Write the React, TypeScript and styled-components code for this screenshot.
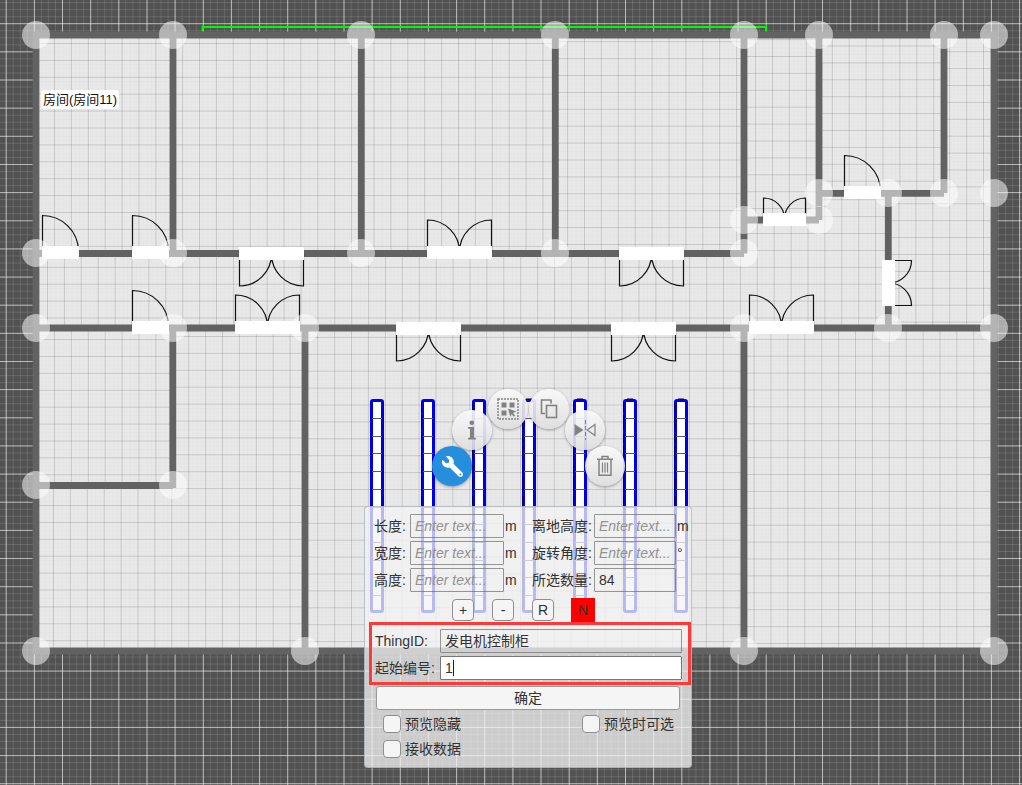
import React, { useState } from 'react';
import styled, { createGlobalStyle } from 'styled-components';
import { FaWrench } from 'react-icons/fa';

const GlobalStyle = createGlobalStyle`
  *, *::before, *::after { box-sizing: border-box; }
  body {
    margin: 0;
    background: #525252;
    color: #323232;
    font-family: "Liberation Sans", "Noto Sans CJK SC", sans-serif;
    font-size: 14px;
  }
`;

const Stage = styled.main`
  position: relative;
  width: 100%;
  min-height: 100vh;
  overflow: hidden;
`;

const PlanCanvas = styled.svg`
  position: absolute;
  inset: 0;
  width: 100%;
  height: 100%;
`;

const RoomTag = styled.div`
  position: absolute;
  left: 41px;
  top: 90px;
  padding: 0 2px;
  border-radius: 3px;
  background: #fff;
  color: #111;
  font-size: 13px;
  line-height: 19px;
  white-space: nowrap;
`;

const ToolButton = styled.button<{ $x: number; $y: number; $active?: boolean }>`
  position: absolute;
  left: ${p => p.$x - 20}px;
  top: ${p => p.$y - 20}px;
  width: 40px;
  height: 40px;
  display: flex;
  align-items: center;
  justify-content: center;
  padding: 0;
  border: 0;
  border-radius: 50%;
  color: ${p => (p.$active ? '#fff' : '#828282')};
  background: ${p =>
    p.$active
      ? '#268fdd'
      : 'linear-gradient(rgba(250, 250, 250, 0.92), rgba(222, 222, 222, 0.9))'};
  box-shadow: 0 1px 3px rgba(0, 0, 0, 0.35);
  cursor: pointer;
`;

const FlippedWrench = styled(FaWrench)`
  transform: scaleX(-1);
`;

const Panel = styled.form`
  position: absolute;
  left: 364px;
  top: 506px;
  width: 328px;
  padding-bottom: 9px;
  border: 1px solid rgba(150, 160, 165, 0.6);
  border-radius: 4px;
  background: rgba(243, 243, 243, 0.76);
`;

const FieldColumns = styled.div`
  display: grid;
  grid-template-columns: 158px 1fr;
  row-gap: 3px;
  padding: 7px 0 0 9px;
`;

const Field = styled.label<{ $labelWidth: number; $inputWidth: string }>`
  display: grid;
  grid-template-columns: ${p => p.$labelWidth}px ${p => p.$inputWidth} auto;
  align-items: center;
  justify-content: start;
  height: 24px;
  line-height: 24px;
  white-space: nowrap;
`;

const Unit = styled.span`
  padding-left: 1px;
`;

const TextInput = styled.input<{ $solid?: boolean }>`
  width: 100%;
  min-width: 0;
  height: 24px;
  padding: 0 4px;
  border: 1px solid ${p => (p.$solid ? '#777' : 'rgba(110, 110, 110, 0.7)')};
  border-radius: 1px;
  outline: 0;
  background: ${p => (p.$solid ? '#fff' : 'transparent')};
  color: #323232;
  font: inherit;
  caret-color: transparent;
  &::placeholder {
    color: #929292;
    font-style: italic;
    opacity: 1;
  }
`;

const StepRow = styled.div`
  display: grid;
  grid-template-columns: repeat(4, 40px);
  justify-items: center;
  align-items: center;
  padding: 6px 0 0 78px;
  height: 30px;
`;

const StepButton = styled.button<{ $alert?: boolean }>`
  width: ${p => (p.$alert ? 24 : 22)}px;
  height: ${p => (p.$alert ? 24 : 22)}px;
  padding: 0;
  border: ${p => (p.$alert ? '0' : '1px solid #8f8f8f')};
  border-radius: ${p => (p.$alert ? 0 : 4)}px;
  background: ${p => (p.$alert ? '#f00' : '#f5f5f5')};
  color: #323232;
  font: inherit;
  cursor: pointer;
`;

const HighlightFrame = styled.div`
  display: grid;
  row-gap: 3px;
  margin-left: 4px;
  padding: 4px 6px 2px 3px;
  border: 3px solid #fd3a3a;
`;

const CaretHolder = styled.span`
  position: relative;
  display: block;
  height: 24px;
`;

const Caret = styled.i`
  position: absolute;
  left: 13px;
  top: 4px;
  width: 1px;
  height: 16px;
  background: #222;
`;

const ConfirmButton = styled.button`
  display: block;
  width: calc(100% - 22px);
  height: 24px;
  margin: 1px 11px 0;
  padding: 0;
  border: 1px solid #999;
  border-radius: 3px;
  background: #f5f5f5;
  color: #323232;
  font: inherit;
  line-height: 20px;
  cursor: pointer;
`;

const CheckGrid = styled.div`
  display: grid;
  grid-template-columns: 199px auto;
  justify-content: start;
  row-gap: 7px;
  padding: 5px 0 0 18px;
`;

const CheckLabel = styled.label`
  display: flex;
  align-items: center;
  gap: 4px;
  height: 18px;
  line-height: 18px;
  white-space: nowrap;
`;

const CheckBox = styled.input`
  appearance: none;
  width: 18px;
  height: 18px;
  margin: 0;
  border: 1px solid #8f8f8f;
  border-radius: 4px;
  background: #f5f5f5;
  &:checked { background: #268fdd; }
`;

type Room = { points: string; gx: number; gy: number };

const ROOMS: Room[] = [
  { points: '36,35 173,35 173,253 36,253', gx: 54.5, gy: 43.5 },
  { points: '173,35 361,35 361,253 173,253', gx: 199.5, gy: 43.5 },
  { points: '361,35 555,35 555,253 361,253', gx: 374, gy: 43.5 },
  { points: '555,35 744,35 744,253 555,253', gx: 567.6, gy: 41.7 },
  { points: '744,35 819,35 819,220 744,220', gx: 755.6, gy: 56.5 },
  { points: '819,35 944,35 944,193 819,193', gx: 832.3, gy: 46 },
  { points: '944,35 994,35 994,328 888,328 888,193 944,193', gx: 949.7, gy: 51.7 },
  { points: '36,253 744,253 744,220 819,220 819,193 888,193 888,328 36,328', gx: 47.5, gy: 267.3 },
  { points: '36,328 173,328 173,485 36,485', gx: 54.5, gy: 339.6 },
  { points: '173,328 305,328 305,651 36,651 36,485 173,485', gx: 188.7, gy: 336.5 },
  { points: '305,328 744,328 744,651 305,651', gx: 368.4, gy: 337.4 },
  { points: '744,328 994,328 994,651 744,651', gx: 771, gy: 339.3 },
];

const WALLS = [
  'M36 35H994V651H36Z',
  'M36 253.5H744M36 328H994M36 485.5H173',
  'M173 35V253M361.3 35V253M555.3 35V253M744 35V253.5M819 35V220M944 35V193',
  'M744 220H819M819 193.3H944M888.3 193V328',
  'M172.8 328V488M305 328V651M744 328V651',
].join('');

const NODES: [number, number][] = [
  [36, 35], [173, 35], [361, 35], [555, 35], [744, 35], [819, 35], [944, 35], [994, 35],
  [36, 253], [173, 253], [361, 253], [555, 253], [744, 253],
  [744, 220], [819, 220], [819, 193], [888, 193], [944, 193], [994, 193],
  [36, 328], [173, 328], [305, 328], [744, 328], [888, 328], [994, 328],
  [36, 485], [173, 485], [36, 651], [305, 651], [744, 651], [994, 651],
];

const SINGLE_DOORS: [number, number][] = [[42, 246], [132, 246], [132, 321], [844, 186]];
const DOUBLE_UP: [number, number, number][] = [
  [427, 246, 32], [235, 321, 32], [749, 321, 32], [763, 213, 21],
];
const DOUBLE_DOWN: [number, number, number][] = [
  [239, 247, 32], [619, 247, 32], [396, 322, 32], [611, 322, 32],
];

const CABINET_COLUMNS = [370, 421, 472, 522, 573, 623, 674];
const CABINETS_PER_COLUMN = 12;
const FLOOR_CELL = 16.9;
const GROUND_CELL = 28.15;

/** Path of vertical and horizontal lines that covers a box, aligned to (gx, gy). */
function gridPath(
  gx: number, gy: number, step: number,
  left: number, top: number, right: number, bottom: number,
) {
  let d = '';
  for (let x = gx - Math.floor((gx - left) / step) * step; x <= right; x += step) {
    d += `M${x.toFixed(1)} ${top}V${bottom}`;
  }
  for (let y = gy - Math.floor((gy - top) / step) * step; y <= bottom; y += step) {
    d += `M${left} ${y.toFixed(1)}H${right}`;
  }
  return d;
}

function roomGrid(room: Room, step: number) {
  const pts = room.points.split(' ').map(p => p.split(',').map(Number));
  const xs = pts.map(p => p[0]);
  const ys = pts.map(p => p[1]);
  return gridPath(
    room.gx, room.gy, step,
    Math.min(...xs), Math.min(...ys), Math.max(...xs), Math.max(...ys),
  );
}

const GROUND_MAJOR = gridPath(6.2, 23.7, GROUND_CELL, 0, 0, 2600, 1600);
const GROUND_MINOR = gridPath(6.2, 23.7, GROUND_CELL / 4, 0, 0, 2600, 1600);

function FloorPlan() {
  return (
    <PlanCanvas aria-label="平面图">
      <defs>
        {ROOMS.map((r, i) => (
          <clipPath key={i} id={`room${i}`}>
            <polygon points={r.points} />
          </clipPath>
        ))}
      </defs>

      <path d={GROUND_MINOR} stroke="#fff" strokeOpacity="0.12" />
      <path d={GROUND_MAJOR} stroke="#fff" strokeOpacity="0.55" />

      {ROOMS.map((r, i) => (
        <g key={i} clipPath={`url(#room${i})`}>
          <polygon points={r.points} fill="#e8e8e8" />
          <path d={roomGrid(r, FLOOR_CELL / 4)} stroke="#000" strokeOpacity="0.01" />
          <path d={roomGrid(r, FLOOR_CELL)} stroke="#000" strokeOpacity="0.13" />
        </g>
      ))}
      <path d={WALLS} fill="none" stroke="#626262" strokeWidth="6.8" />
      <path d="M202.5 31V27H766V31" fill="none" stroke="#00fa00" strokeWidth="2" />

      <g fill="none" stroke="#111" strokeWidth="1.2">
        {SINGLE_DOORS.map(([x, y]) => (
          <g key={`${x}-${y}`}>
            <path d={`M${x + 0.5} ${y + 5}V${y - 30.5}A36 36 0 0 1 ${x + 36.5} ${y + 5}`} />
            <rect x={x} y={y} width="37" height="13" fill="#fff" stroke="none" />
          </g>
        ))}
        {DOUBLE_UP.map(([x, y, r]) => (
          <g key={`${x}-${y}`}>
            <path
              d={`M${x + 0.5} ${y + 6}v${-r}a${r} ${r} 0 0 1 ${r} ${r}a${r} ${r} 0 0 1 ${r} ${-r}v${r}`}
            />
            <rect x={x} y={y} width={2 * r + 1} height="13" fill="#fff" stroke="none" />
          </g>
        ))}
        {DOUBLE_DOWN.map(([x, y, r]) => (
          <g key={`${x}-${y}`}>
            <path
              d={`M${x + 0.5} ${y + 7}v${r}a${r} ${r} 0 0 0 ${r} ${-r}a${r} ${r} 0 0 0 ${r} ${r}v${-r}`}
            />
            <rect x={x} y={y} width={2 * r + 1} height="13" fill="#fff" stroke="none" />
          </g>
        ))}
        <path d="M889 260.5H911.5A22.5 22.5 0 0 1 889 283A22.5 22.5 0 0 1 911.5 305.5H889" />
        <rect x="882" y="260" width="13" height="46" fill="#fff" stroke="none" />
      </g>

      <g fill="#fff" fillOpacity="0.52">
        {NODES.map(([x, y]) => (
          <circle key={`${x}-${y}`} cx={x} cy={y} r="14" />
        ))}
      </g>

      {CABINET_COLUMNS.map((x, i) => (
        <g key={x} fill="none">
          <rect x={x + 1.5} y="400.5" width="11" height="211" rx="1.5" fill="#fff" stroke="#0000e8" strokeWidth="3" />
          <path
            d={Array.from({ length: CABINETS_PER_COLUMN - 1 }, (_, n) => {
              const y = 418.5 + Math.round(n * 17.7);
              return `M${x + 2} ${y}h10`;
            }).join('')}
            stroke="#55557a"
          />
          <path
            d={`M${i === 0 ? x + 13.5 : x + 0.5} 403V610`}
            stroke="#000066"
            strokeDasharray="9 3 14 5"
          />
          {i > 2 && <path d={`M${x + 4} 399h6`} stroke="#000044" />}
        </g>
      ))}
    </PlanCanvas>
  );
}

const InfoIcon = () => (
  <svg width="10" height="20" viewBox="0 0 10 20" fill="currentColor" aria-hidden="true">
    <circle cx="4.8" cy="2.7" r="2.3" />
    <path d="M1 7H7V17.6L9 18V19.4H1V18L3 17.6V8.8L1 8.4Z" />
  </svg>
);

const MultiSelectIcon = () => (
  <svg width="22" height="22" viewBox="0 0 22 22" fill="currentColor" aria-hidden="true">
    <rect x="1" y="1" width="20" height="20" fill="none" stroke="currentColor" strokeWidth="1.5" strokeDasharray="2 1" />
    <rect x="4.5" y="4.5" width="5" height="5" />
    <rect x="12.5" y="4.5" width="5" height="5" />
    <rect x="4.5" y="12.5" width="5" height="5" />
    <path d="M11 10.5l8.5 3-3.6 1.5 2.2 2.6-1.3 1.1-2.2-2.6-1.2 2.9z" />
  </svg>
);

const CopyIcon = () => (
  <svg width="20" height="22" viewBox="0 0 20 22" fill="none" stroke="currentColor" strokeWidth="1.6" aria-hidden="true">
    <path d="M6 15.5H2.5V2H12V5.5" />
    <rect x="7.5" y="7.5" width="10" height="12" />
  </svg>
);

const MirrorIcon = () => (
  <svg width="22" height="22" viewBox="0 0 22 22" fill="none" stroke="currentColor" aria-hidden="true">
    <path d="M0.5 5v12l9-6z" fill="currentColor" stroke="none" />
    <path d="M11.5 1v20" strokeDasharray="4 2" />
    <path d="M21 5.5v11l-7.8-5.5z" strokeWidth="1.2" />
  </svg>
);

const TrashIcon = () => (
  <svg width="18" height="22" viewBox="0 0 18 22" fill="none" stroke="currentColor" strokeWidth="1.5" aria-hidden="true">
    <path d="M1 4.2H17M6 4V1.6H12V4M3 5V20.2H15V5" />
    <path d="M6.5 7.5V17.5M9 7.5V17.5M11.5 7.5V17.5" strokeWidth="1.2" />
  </svg>
);

const TOOLS = [
  { label: '信息', x: 472, y: 430, icon: <InfoIcon /> },
  { label: '多选', x: 508, y: 409, icon: <MultiSelectIcon /> },
  { label: '复制', x: 549, y: 409, icon: <CopyIcon /> },
  { label: '镜像', x: 585, y: 430, icon: <MirrorIcon /> },
  { label: '设置', x: 452, y: 466, icon: <FlippedWrench size={21} />, active: true },
  { label: '删除', x: 605, y: 466, icon: <TrashIcon /> },
];

const FIELDS = [
  { label: '长度:', unit: 'm' },
  { label: '离地高度:', unit: 'm', wide: true },
  { label: '宽度:', unit: 'm' },
  { label: '旋转角度:', unit: '°', wide: true },
  { label: '高度:', unit: 'm' },
  { label: '所选数量:', unit: '', wide: true, value: '84' },
];

export default function App() {
  const [thingId, setThingId] = useState('发电机控制柜');
  const [startNo, setStartNo] = useState('1');

  return (
    <>
      <GlobalStyle />
      <Stage>
        <FloorPlan />
        <RoomTag>房间(房间11)</RoomTag>
        {TOOLS.map(t => (
          <ToolButton key={t.label} type="button" aria-label={t.label} $x={t.x} $y={t.y} $active={t.active}>
            {t.icon}
          </ToolButton>
        ))}
        <Panel onSubmit={e => e.preventDefault()}>
          <FieldColumns>
            {FIELDS.map(f => (
              <Field key={f.label} $labelWidth={f.wide ? 62 : 36} $inputWidth={f.wide ? '82px' : '94px'}>
                <span>{f.label}</span>
                <TextInput type="text" placeholder="Enter text..." defaultValue={f.value} />
                <Unit>{f.unit}</Unit>
              </Field>
            ))}
          </FieldColumns>
          <StepRow>
            <StepButton type="button">+</StepButton>
            <StepButton type="button">-</StepButton>
            <StepButton type="button">R</StepButton>
            <StepButton type="button" $alert>N</StepButton>
          </StepRow>
          <HighlightFrame>
            <Field $labelWidth={65} $inputWidth="1fr">
              <span>ThingID:</span>
              <TextInput type="text" value={thingId} onChange={e => setThingId(e.target.value)} />
            </Field>
            <Field $labelWidth={65} $inputWidth="1fr">
              <span>起始编号:</span>
              <CaretHolder>
                <TextInput $solid type="text" value={startNo} onChange={e => setStartNo(e.target.value)} />
                <Caret />
              </CaretHolder>
            </Field>
          </HighlightFrame>
          <ConfirmButton type="submit">确定</ConfirmButton>
          <CheckGrid>
            <CheckLabel><CheckBox type="checkbox" />预览隐藏</CheckLabel>
            <CheckLabel><CheckBox type="checkbox" />预览时可选</CheckLabel>
            <CheckLabel><CheckBox type="checkbox" />接收数据</CheckLabel>
          </CheckGrid>
        </Panel>
      </Stage>
    </>
  );
}
